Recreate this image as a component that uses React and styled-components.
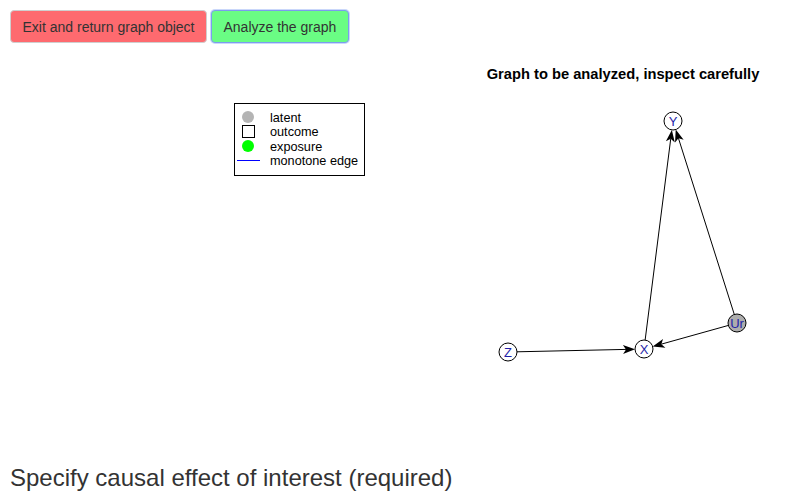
import React from "react";
import styled, { createGlobalStyle } from "styled-components";

const Global = createGlobalStyle`
  html, body { margin: 0; padding: 0; background: #fff; }
  body { font-family: "Liberation Sans", Arial, sans-serif; color: #333; font-size: 14px; }
`;

const Page = styled.div`
  padding: 10px 0 0 10px;
  width: 795px;
  box-sizing: border-box;
`;

const ButtonRow = styled.div`
  display: flex;
  gap: 4px;
`;

const Button = styled.button`
  font-family: "Liberation Sans", Arial, sans-serif;
  font-size: 14px;
  line-height: 20px;
  color: #333;
  padding: 6px 11.5px;
  border-radius: 4px;
  height: 33px;
  box-sizing: border-box;
  cursor: pointer;
  background: ${(p) => (p.$tone === "red" ? "#fe6a6f" : "#6afd84")};
  border: 1px solid ${(p) => (p.$focused ? "#7c9cf0" : "#cfcfcf")};
  box-shadow: ${(p) => (p.$focused ? "0 0 0 1px rgba(102,140,240,0.35)" : "none")};
`;

const Plot = styled.svg`
  display: block;
  margin-top: 7px;
`;

const Heading = styled.h3`
  font-family: "Liberation Sans", Arial, sans-serif;
  font-weight: 400;
  font-size: 24px;
  line-height: 1.1;
  color: #333;
  margin: 25px 0 0 0;
`;

// page coordinates -> plot coordinates (plot origin at 10,50)
const OX = 10;
const OY = 50;
const nodes = {
  Y: { x: 673, y: 121, fill: "#fff" },
  X: { x: 644, y: 349, fill: "#fff" },
  Z: { x: 508, y: 352, fill: "#fff" },
  Ur: { x: 737, y: 323, fill: "#adadad" },
};
const R = 9;
const edges = [
  ["Z", "X"],
  ["X", "Y"],
  ["Ur", "Y"],
  ["Ur", "X"],
];

function Edge({ from, to }) {
  const a = nodes[from];
  const b = nodes[to];
  const dx = b.x - a.x;
  const dy = b.y - a.y;
  const len = Math.hypot(dx, dy);
  const ux = dx / len;
  const uy = dy / len;
  const sx = a.x + ux * R - OX;
  const sy = a.y + uy * R - OY;
  const tx = b.x - ux * R - OX;
  const ty = b.y - uy * R - OY;
  const L = 12;
  const W = 4.5;
  const bx = tx - ux * L;
  const by = ty - uy * L;
  const nx = -uy;
  const ny = ux;
  const mx = tx - ux * (L - 3);
  const my = ty - uy * (L - 3);
  const pts = `${tx},${ty} ${bx + nx * W},${by + ny * W} ${mx},${my} ${bx - nx * W},${by - ny * W}`;
  return (
    <g>
      <line x1={sx} y1={sy} x2={mx} y2={my} stroke="#000" strokeWidth="1" />
      <polygon points={pts} fill="#000" />
    </g>
  );
}

function Node({ id }) {
  const n = nodes[id];
  return (
    <g>
      <circle cx={n.x - OX} cy={n.y - OY} r={R} fill={n.fill} stroke="#000" strokeWidth="1" />
      <text
        x={n.x - OX}
        y={n.y - OY + 4.5}
        textAnchor="middle"
        fontSize="13"
        fontFamily="Liberation Sans, Arial, sans-serif"
        fill="#1f1fa8"
      >
        {id}
      </text>
    </g>
  );
}

function Legend() {
  const x0 = 234 - OX;
  const y0 = 103 - OY;
  const items = [
    { label: "latent", y: 117 },
    { label: "outcome", y: 131 },
    { label: "exposure", y: 146 },
    { label: "monotone edge", y: 160 },
  ];
  return (
    <g fontFamily="Liberation Sans, Arial, sans-serif" fontSize="12.7" fill="#000">
      <rect x={x0 + 0.5} y={y0 + 0.5} width={130} height={72} fill="#fff" stroke="#000" />
      <circle cx={248 - OX} cy={117 - OY} r={6} fill="#b4b4b4" />
      <rect x={242 - OX + 0.5} y={125 - OY + 0.5} width={12} height={12} fill="#fff" stroke="#000" />
      <circle cx={248 - OX} cy={146 - OY} r={6} fill="#00ff00" />
      <line x1={237 - OX} y1={160.5 - OY} x2={260 - OX} y2={160.5 - OY} stroke="#0000ff" strokeWidth="1" />
      {items.map((it) => (
        <text key={it.label} x={270 - OX} y={it.y - OY + 4.5}>
          {it.label}
        </text>
      ))}
    </g>
  );
}

export default function App() {
  return (
    <>
      <Global />
      <Page>
        <ButtonRow>
          <Button $tone="red">Exit and return graph object</Button>
          <Button $tone="green" $focused>Analyze the graph</Button>
        </ButtonRow>
        <Plot width="785" height="390" viewBox="0 0 785 390">
          <text
            x={623 - OX}
            y={79 - OY}
            textAnchor="middle"
            fontFamily="Liberation Sans, Arial, sans-serif"
            fontWeight="bold"
            fontSize="14.7"
            fill="#000"
          >
            Graph to be analyzed, inspect carefully
          </text>
          <Legend />
          {edges.map(([f, t]) => (
            <Edge key={f + t} from={f} to={t} />
          ))}
          {Object.keys(nodes).map((id) => (
            <Node key={id} id={id} />
          ))}
        </Plot>
        <Heading>Specify causal effect of interest (required)</Heading>
      </Page>
    </>
  );
}
